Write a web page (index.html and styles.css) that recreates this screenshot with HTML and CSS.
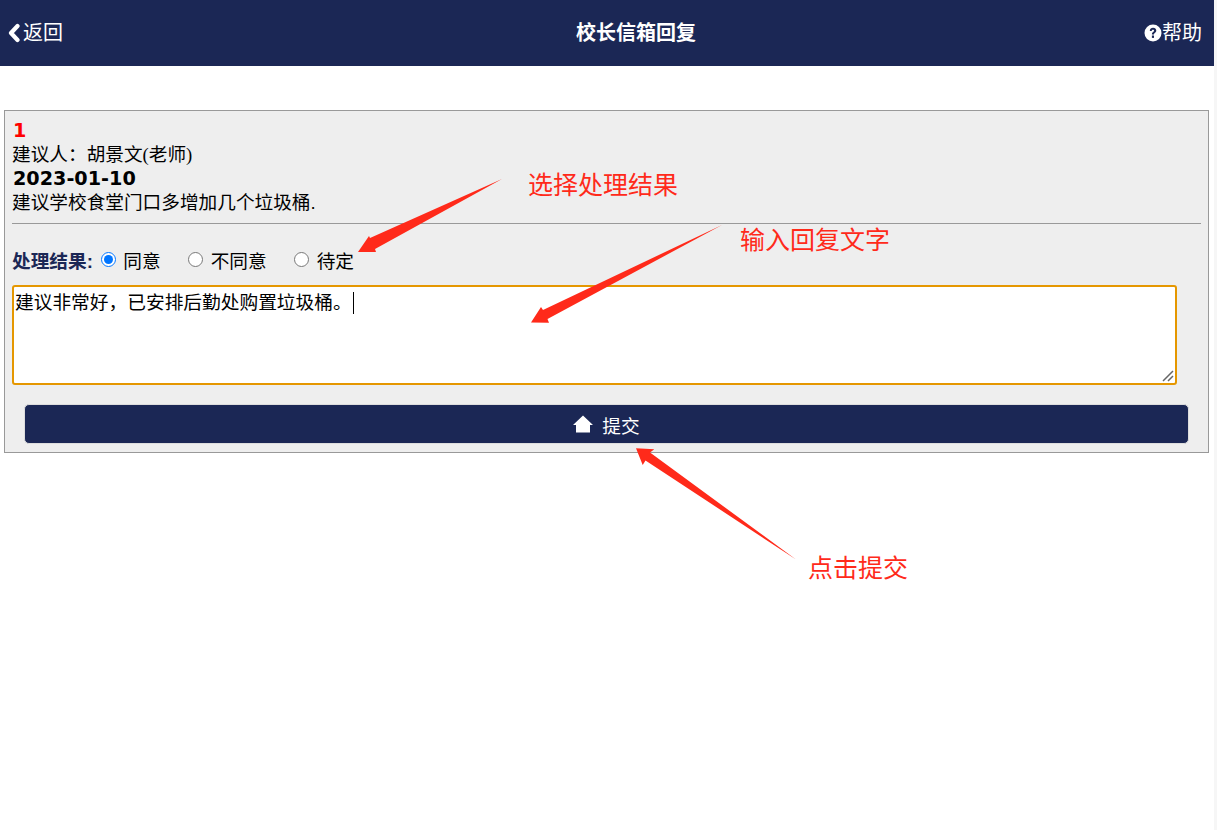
FILE: index.html
```html
<!DOCTYPE html>
<html lang="zh">
<head>
<meta charset="utf-8">
<title>校长信箱回复</title>
<link rel="stylesheet" href="styles.css">
</head>
<body>
<header class="topbar">
  <a class="nav-link"><svg class="ico-back" viewBox="0 0 13 20"><path d="M10.500 3 4 10l6.500 7" fill="none" stroke="#fff" stroke-width="4.200" stroke-linecap="round" stroke-linejoin="round"/></svg>返回</a>
  <h1 class="title">校长信箱回复</h1>
  <a class="nav-link"><svg class="ico-help" viewBox="0 0 18 18"><circle cx="9" cy="9" r="8.500" fill="#fff"/><path d="M5.800 7c0-2 1.500-3.200 3.300-3.200 1.800 0 3.200 1.100 3.200 2.800 0 2.300-2.300 2.200-2.300 3.900H7.900c0-2.600 2.200-2.700 2.200-3.700 0-.6-.5-1-1.100-1-.8 0-1.200.5-1.300 1.300z" fill="#1b2755"/><rect x="7.900" y="11.500" width="2.100" height="2.400" fill="#1b2755"/></svg>帮助</a>
</header>
<main class="card">
  <div class="num">1</div>
  <div class="line">建议人：胡景文<span class="role">(老师)</span></div>
  <div class="date">2023-01-10</div>
  <div class="line">建议学校食堂门口多增加几个垃圾桶.</div>
  <hr class="rule">
  <div class="result">
    <b class="result-label">处理结果:</b>
    <label class="opt"><input type="radio" name="r" checked>同意</label>
    <label class="opt"><input type="radio" name="r">不同意</label>
    <label class="opt"><input type="radio" name="r">待定</label>
  </div>
  <div class="input-box"><span class="typed">建议非常好，已安排后勤处购置垃圾桶。</span><span class="caret"></span>
    <svg class="grip" viewBox="0 0 12 12"><path d="M1 11 11 1M6 11l5-5" stroke="#666" stroke-width="1.500" fill="none"/></svg>
  </div>
  <button class="submit" type="button"><svg class="ico-home" viewBox="0 0 20 18"><path d="M10 .5 0 10h3v7.500h14V10h3z" fill="#fff"/></svg>提交</button>
</main>
<svg class="arrows" viewBox="0 0 1217 830">
  <g fill="#ff2a1a">
    <path d="M502 179 370 238 369 236 358 252 376 252 375 249z"/>
    <path d="M722 225 543 310 541 307 531 322.500 549 322.700 547.500 319z"/>
    <path d="M796 559.500 650 452.500 654.300 449.300 636 448.300 642.700 465 645.500 460.500z"/>
  </g>
</svg>
<span class="note note-a">选择处理结果</span>
<span class="note note-b">输入回复文字</span>
<span class="note note-c">点击提交</span>
</body>
</html>
```
FILE: styles.css
```css
* { box-sizing: border-box; }
html, body { margin: 0; padding: 0; background: #fff; }
body {
  position: relative;
  min-height: 830px;
  font-family: "Liberation Sans", "Noto Sans CJK SC", sans-serif;
  font-size: 18.67px;
  color: #000;
  overflow: hidden;
}
body::after {
  content: "";
  position: absolute;
  top: 0;
  right: 0;
  width: 3px;
  height: 100%;
  background: #f6f6f6;
}
.topbar {
  height: 66px;
  padding: 0 15px 0 7px;
  background: #1b2755;
  color: #fff;
  display: flex;
  align-items: center;
  justify-content: space-between;
}
.nav-link { display: flex; align-items: center; line-height: 24px; font-size: 20px; }
.ico-back { width: 13px; height: 20px; margin-right: 3px; }
.ico-help { width: 18px; height: 18px; }
.title { margin: 0 0 0 65px; font-size: 20px; font-weight: 700; line-height: 24px; }
.card {
  margin: 44px 8px 0 4px;
  height: 343px;
  padding: 8px 7px 0;
  background: #eee;
  border: 1px solid #999;
}
.num, .date {
  font-family: "DejaVu Sans", sans-serif;
  font-weight: 700;
  font-size: 19.2px;
  padding-left: 1px;
}
.num { color: #f00; line-height: 23px; margin-bottom: 1px; }
.date { line-height: 24px; }
.line { line-height: 24px; height: 24px; }
.role { font-family: "Liberation Serif", "Noto Sans CJK SC", serif; }
.rule { margin: 8px 0 0; height: 1px; border: 0; background: #999; }
.result { display: flex; align-items: center; margin-top: 22px; height: 26px; }
.result-label { color: #1b2755; margin-right: 8px; }
.opt { display: flex; align-items: center; margin-right: 27.5px; }
.opt input { margin: 1px 7.5px 0 0; width: 15px; height: 15px; accent-color: #0075ff; }
.input-box {
  position: relative;
  margin-top: 13px;
  width: 1165px;
  height: 100px;
  padding: 5px 1px;
  background: #fff;
  border: 2px solid #e59700;
  border-radius: 3px;
  line-height: 22px;
  display: flex;
  align-items: flex-start;
}
.typed { font-size: 18.72px; }
.caret { width: 1px; height: 22px; margin-left: 1px; background: #000; }
.grip { position: absolute; right: 1px; bottom: 1px; width: 12px; height: 12px; }
.submit {
  display: flex;
  align-items: center;
  justify-content: center;
  width: 1165px;
  height: 40px;
  margin: 19px 0 0 12px;
  padding: 0;
  border: 1px solid #ddd;
  border-radius: 5px;
  background: #1b2755;
  color: #fff;
  font: inherit;
}
.ico-home { width: 20px; height: 18px; margin-right: 9px; }
.arrows { position: absolute; left: 0; top: 0; width: 1217px; height: 830px; pointer-events: none; }
.note { position: absolute; color: #ff2a1a; font-size: 25px; line-height: 30px; }
.note-a { left: 528px; top: 170px; }
.note-b { left: 740px; top: 225px; }
.note-c { left: 808px; top: 553px; }
```
